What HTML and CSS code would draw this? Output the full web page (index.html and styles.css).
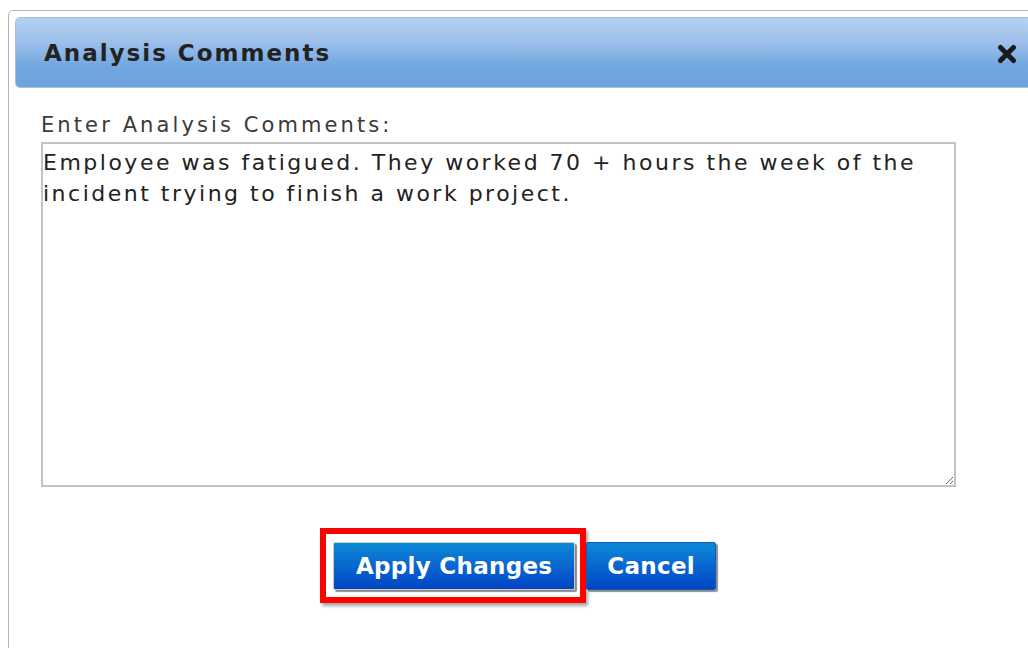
FILE: index.html
```html
<!DOCTYPE html>
<html lang="en">
<head>
<meta charset="utf-8">
<title>Analysis Comments</title>
<link rel="stylesheet" href="styles.css">
</head>
<body>
<div class="dialog">
  <div class="titlebar">
    <span class="title">Analysis Comments</span>
    <button class="close" type="button" aria-label="Close">
      <svg width="20" height="20" viewBox="0 0 20 20"><path d="M3.5 3.5 L16.5 16.5 M16.5 3.5 L3.5 16.5" stroke="#1a1a1a" stroke-width="5" stroke-linecap="round"/></svg>
    </button>
  </div>
  <div class="content">
    <label class="label" for="comments">Enter Analysis Comments:</label>
    <textarea id="comments" class="comments">Employee was fatigued. They worked 70 + hours the week of the incident trying to finish a work project.</textarea>
  </div>
  <div class="buttonpane">
    <span class="highlight"><button class="btn btn-apply" type="button">Apply Changes</button></span>
    <button class="btn btn-cancel" type="button">Cancel</button>
  </div>
</div>
</body>
</html>
```
FILE: styles.css
```css
html, body {
  margin: 0;
  padding: 0;
  background: #fff;
  overflow: hidden;
}

body {
  font-family: "DejaVu Sans", Verdana, sans-serif;
  height: 648px;
}

/* dialog frame runs a little past the right edge of the window */
.dialog {
  margin: 10px 0 0 8px;
  width: 1040px;
  height: 660px;
  box-sizing: border-box;
  border: 1px solid #b4b4b4;
  border-radius: 5px;
  padding: 6px;
  display: flex;
  flex-direction: column;
}

.titlebar {
  height: 71px;
  box-sizing: border-box;
  border: 1px solid #a9bfd9;
  border-radius: 5px;
  background: linear-gradient(to bottom, #b6d1f1 0%, #9cc0ea 35%, #72a6df 70%, #6fa3de 100%);
  display: flex;
  align-items: center;
  justify-content: space-between;
  padding: 0 23px 0 28px;
}

.title {
  font-weight: bold;
  font-size: 23px;
  letter-spacing: 2px;
  color: #222;
}

.close {
  border: 0;
  background: none;
  padding: 0;
  width: 20px;
  height: 20px;
  display: flex;
  margin-top: 2px;
}

.content {
  padding: 22px 26px 0 26px;
  display: flex;
  flex-direction: column;
}

.label {
  font-size: 21px;
  letter-spacing: 3.1px;
  color: #3a3a3a;
  line-height: 30px;
  margin-bottom: 2px;
}

.comments {
  width: 915px;
  height: 345px;
  box-sizing: border-box;
  border: 2px solid #c4c4c4;
  border-radius: 0;
  padding: 3px 0 0 0;
  margin: 0;
  font-family: "DejaVu Sans", Verdana, sans-serif;
  font-size: 22px;
  letter-spacing: 2.5px;
  line-height: 31px;
  color: #222;
  resize: both;
}

.buttonpane {
  display: flex;
  justify-content: center;
  align-items: center;
  margin-top: 41px;
  padding-right: 20px;
}

.highlight {
  display: inline-flex;
  border: 6px solid #ff0000;
  padding: 8px 5px 7px 7px;
  box-shadow: 2px 3px 3px rgba(0, 0, 0, 0.35);
}

.btn {
  height: 48px;
  box-sizing: border-box;
  border: 1px solid #0b5bb8;
  border-radius: 2px;
  background: linear-gradient(to bottom, #0a8ad6 0%, #0a6ad0 45%, #0044c4 100%);
  color: #fff;
  font-family: "DejaVu Sans", Verdana, sans-serif;
  font-weight: bold;
  font-size: 23px;
  box-shadow: 2px 2px 1px rgba(0, 0, 0, 0.45);
}

.btn-apply {
  padding: 0 22px;
  border-color: #c8c8c8;
  letter-spacing: 0.3px;
}

.btn-cancel {
  padding: 0 20px;
  letter-spacing: 0.3px;
}
```
